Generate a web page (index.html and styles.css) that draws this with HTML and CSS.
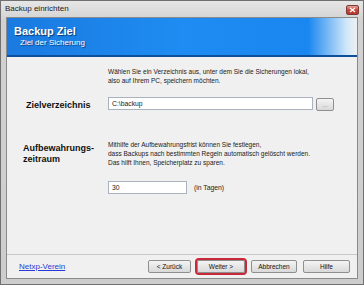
FILE: index.html
```html
<!DOCTYPE html>
<html>
<head>
<meta charset="utf-8">
<link rel="stylesheet" href="styles.css">
</head>
<body>
<div class="window">
  <div class="titlebar">
    <span class="title">Backup einrichten</span>
    <span class="close"><svg width="7" height="6" viewBox="0 0 7 6"><path d="M1 1 L6 5 M6 1 L1 5" stroke="#fff" stroke-width="1.3"/></svg></span>
  </div>
  <div class="client">
    <div class="banner">
      <div class="banner-title">Backup Ziel</div>
      <div class="banner-sub">Ziel der Sicherung</div>
    </div>
    <div class="content">
      <div class="row row-dir">
        <div class="label label-dir">Zielverzeichnis</div>
        <div class="field">
          <p class="desc">Wählen Sie ein Verzeichnis aus, unter dem Sie die Sicherungen lokal,<br>also auf Ihrem PC, speichern möchten.</p>
          <div class="inputline">
            <div class="input input-wide">C:\backup</div>
            <div class="btn btn-browse">...</div>
          </div>
        </div>
      </div>
      <div class="row row-keep">
        <div class="label label-keep">Aufbewahrungs-<br>zeitraum</div>
        <div class="field">
          <p class="desc">Mithilfe der Aufbewahrungsfrist können Sie festlegen,<br>dass Backups nach bestimmten Regeln automatisch gelöscht werden.<br>Das hilft Ihnen, Speicherplatz zu sparen.</p>
          <div class="inputline inputline-days">
            <div class="input input-small">30</div>
            <span class="unit">(in Tagen)</span>
          </div>
        </div>
      </div>
    </div>
    <div class="footer">
      <a class="link">Netxp-Verein</a>
      <div class="buttons">
        <div class="btn btn-nav">&lt; Zurück</div>
        <div class="btn btn-nav btn-default">Weiter &gt;</div>
        <div class="btn btn-nav btn-cancel">Abbrechen</div>
        <div class="btn btn-nav btn-help">Hilfe</div>
      </div>
    </div>
  </div>
</div>
</body>
</html>
```
FILE: styles.css
```css
* { box-sizing: border-box; }
html, body { margin: 0; padding: 0; }
body { width: 364px; height: 285px; overflow: hidden; font-family: "Liberation Sans", Arial, sans-serif; }
.window {
  width: 364px; height: 285px;
  background: linear-gradient(#e6e6e6, #d2d2d2 20px, #cdcdcd);
  border: 1px solid #707070;
  display: flex; flex-direction: column;
}
.titlebar {
  height: 15px; display: flex; align-items: center; justify-content: space-between;
  padding: 0 4px 0 4px;
}
.title { font-size: 8px; color: #222; }
.close {
  width: 13px; height: 10px; border-radius: 2px;
  background: linear-gradient(#e8a49a, #c8443a 50%, #b8362c);
  border: 1px solid #7a3a35;
  display: flex; align-items: center; justify-content: center;
  margin-top: 2px;
}
.close svg { display: block; }
.client {
  flex: 1; margin: 1px 5px 5px 5px;
  border: 1px solid #8a8a8a;
  background: #f0f0f0;
  display: flex; flex-direction: column;
}
.banner {
  height: 39px;
  background: linear-gradient(90deg, #1a7ae0 0%, #1e8cf2 50%, #1a86f0 86%, #cfe7fa 97%, #f0f0f0 100%);
  border-bottom: 2px solid #0d4f9a;
  padding: 7px 0 0 7px;
  color: #fff;
}
.banner-title { font-size: 11px; font-weight: bold; line-height: 12px; text-shadow: 1px 1px 1px #0a3a70; }
.banner-sub { font-size: 8px; line-height: 10px; padding-left: 6px; margin-top: 1px; text-shadow: 1px 1px 1px #0a3a70; }
.content { flex: 1; padding: 10px 0 0 0; }
.row { display: flex; }
.label { width: 101px; font-weight: bold; font-size: 9px; color: #111; }
.label-dir { padding: 33px 0 0 19px; }
.label-keep { padding: 3px 0 0 16px; line-height: 11px; }
.field { flex: 1; }
.desc { margin: 0; font-size: 6.5px; line-height: 9px; color: #1a1a1a; }
.inputline { display: flex; align-items: center; margin-top: 11px; }
.input {
  height: 13px; background: #fff; border: 1px solid #a9b3bf;
  font-size: 6.8px; line-height: 11px; padding-left: 3px; color: #222;
}
.input-wide { width: 205px; }
.input-small { width: 79px; }
.btn {
  border: 1px solid #8e8f8f; border-radius: 2px;
  background: linear-gradient(#f4f4f4, #e6e6e6 50%, #d9d9d9);
  font-size: 6.5px; color: #111; text-align: center;
  display: flex; align-items: center; justify-content: center;
}
.btn-browse { width: 18px; height: 13px; margin-left: 3px; margin-top: 2px; font-size: 6px; color: #777; }
.row-keep { margin-top: 29px; }
.inputline-days { margin-top: 14px; }
.unit { font-size: 6.8px; color: #222; margin-left: 7px; }
.footer {
  height: 24px; border-top: 1px solid #c8c8c8;
  display: flex; align-items: center; justify-content: space-between;
  padding: 0 7px 0 12px;
}
.link { font-size: 8px; color: #2a3ad6; text-decoration: underline; }
.buttons { display: flex; gap: 6px; }
.btn-nav { width: 43px; height: 13px; }
.btn-default { width: 48px; outline: 2px solid #c8283a; outline-offset: 0; }
.btn-cancel { width: 46px; }
.btn-help { width: 47px; }
```
